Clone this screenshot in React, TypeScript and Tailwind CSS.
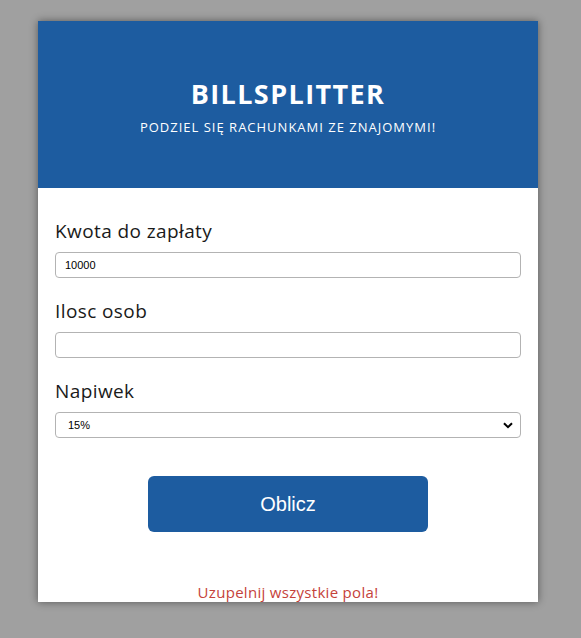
import React from "react";

export default function App() {
  const mont = { fontFamily: '"Open Sans", "Noto Sans", sans-serif' };
  const arial = { fontFamily: '"Liberation Sans", Arial, sans-serif' };
  return (
    <div className="w-[581px] h-[638px] bg-[#a0a0a0] pt-[21px]" style={mont}>
      <div className="ml-[38px] w-[500px] h-[581px] overflow-hidden bg-white shadow-[0_0_8px_rgba(0,0,0,0.45)]">
        <div className="h-[167px] bg-[#1d5ca0] flex flex-col items-center justify-center text-white pt-[4px]">
          <h1 className="text-[27px] font-bold leading-none tracking-[1.4px]">BILLSPLITTER</h1>
          <p className="text-[13px] mt-[14px] leading-none tracking-[1px]">PODZIEL SIĘ RACHUNKAMI ZE ZNAJOMYMI!</p>
        </div>
        <div className="px-[17px] pt-[34px]">
          <label className="block text-[19px] leading-none text-[#1a1a1a] tracking-[0.4px]">Kwota do zapłaty</label>
          <input
            defaultValue="10000"
            className="mt-[11px] block w-full h-[26px] border border-[#b3b3b3] rounded-[4px] px-[9px] text-[11px] text-black"
            style={arial}
          />
          <label className="block mt-[24px] text-[19px] leading-none text-[#1a1a1a] tracking-[0.4px]">Ilosc osob</label>
          <input
            className="mt-[11px] block w-full h-[26px] border border-[#b3b3b3] rounded-[4px] px-[9px] text-[11px] text-black"
            style={arial}
          />
          <label className="block mt-[24px] text-[19px] leading-none text-[#1a1a1a] tracking-[0.4px]">Napiwek</label>
          <div className="relative mt-[11px] h-[26px] border border-[#b3b3b3] rounded-[4px] flex items-center px-[12px] text-[11px] text-black" style={arial}>
            <span>15%</span>
            <svg className="absolute right-[7px] top-[9px]" width="10" height="7" viewBox="0 0 10 7">
              <path d="M1 1.2 L5 5.2 L9 1.2" fill="none" stroke="#000" strokeWidth="2" />
            </svg>
          </div>
          <div className="flex justify-center mt-[38px]">
            <button
              className="w-[280px] h-[56px] rounded-[6px] bg-[#1d5ca0] text-white text-[20px]"
              style={arial}
            >
              Oblicz
            </button>
          </div>
          <p className="text-center mt-[53px] text-[15px] leading-none text-[#c5423a] tracking-[0.3px]">Uzupelnij wszystkie pola!</p>
        </div>
      </div>
    </div>
  );
}
